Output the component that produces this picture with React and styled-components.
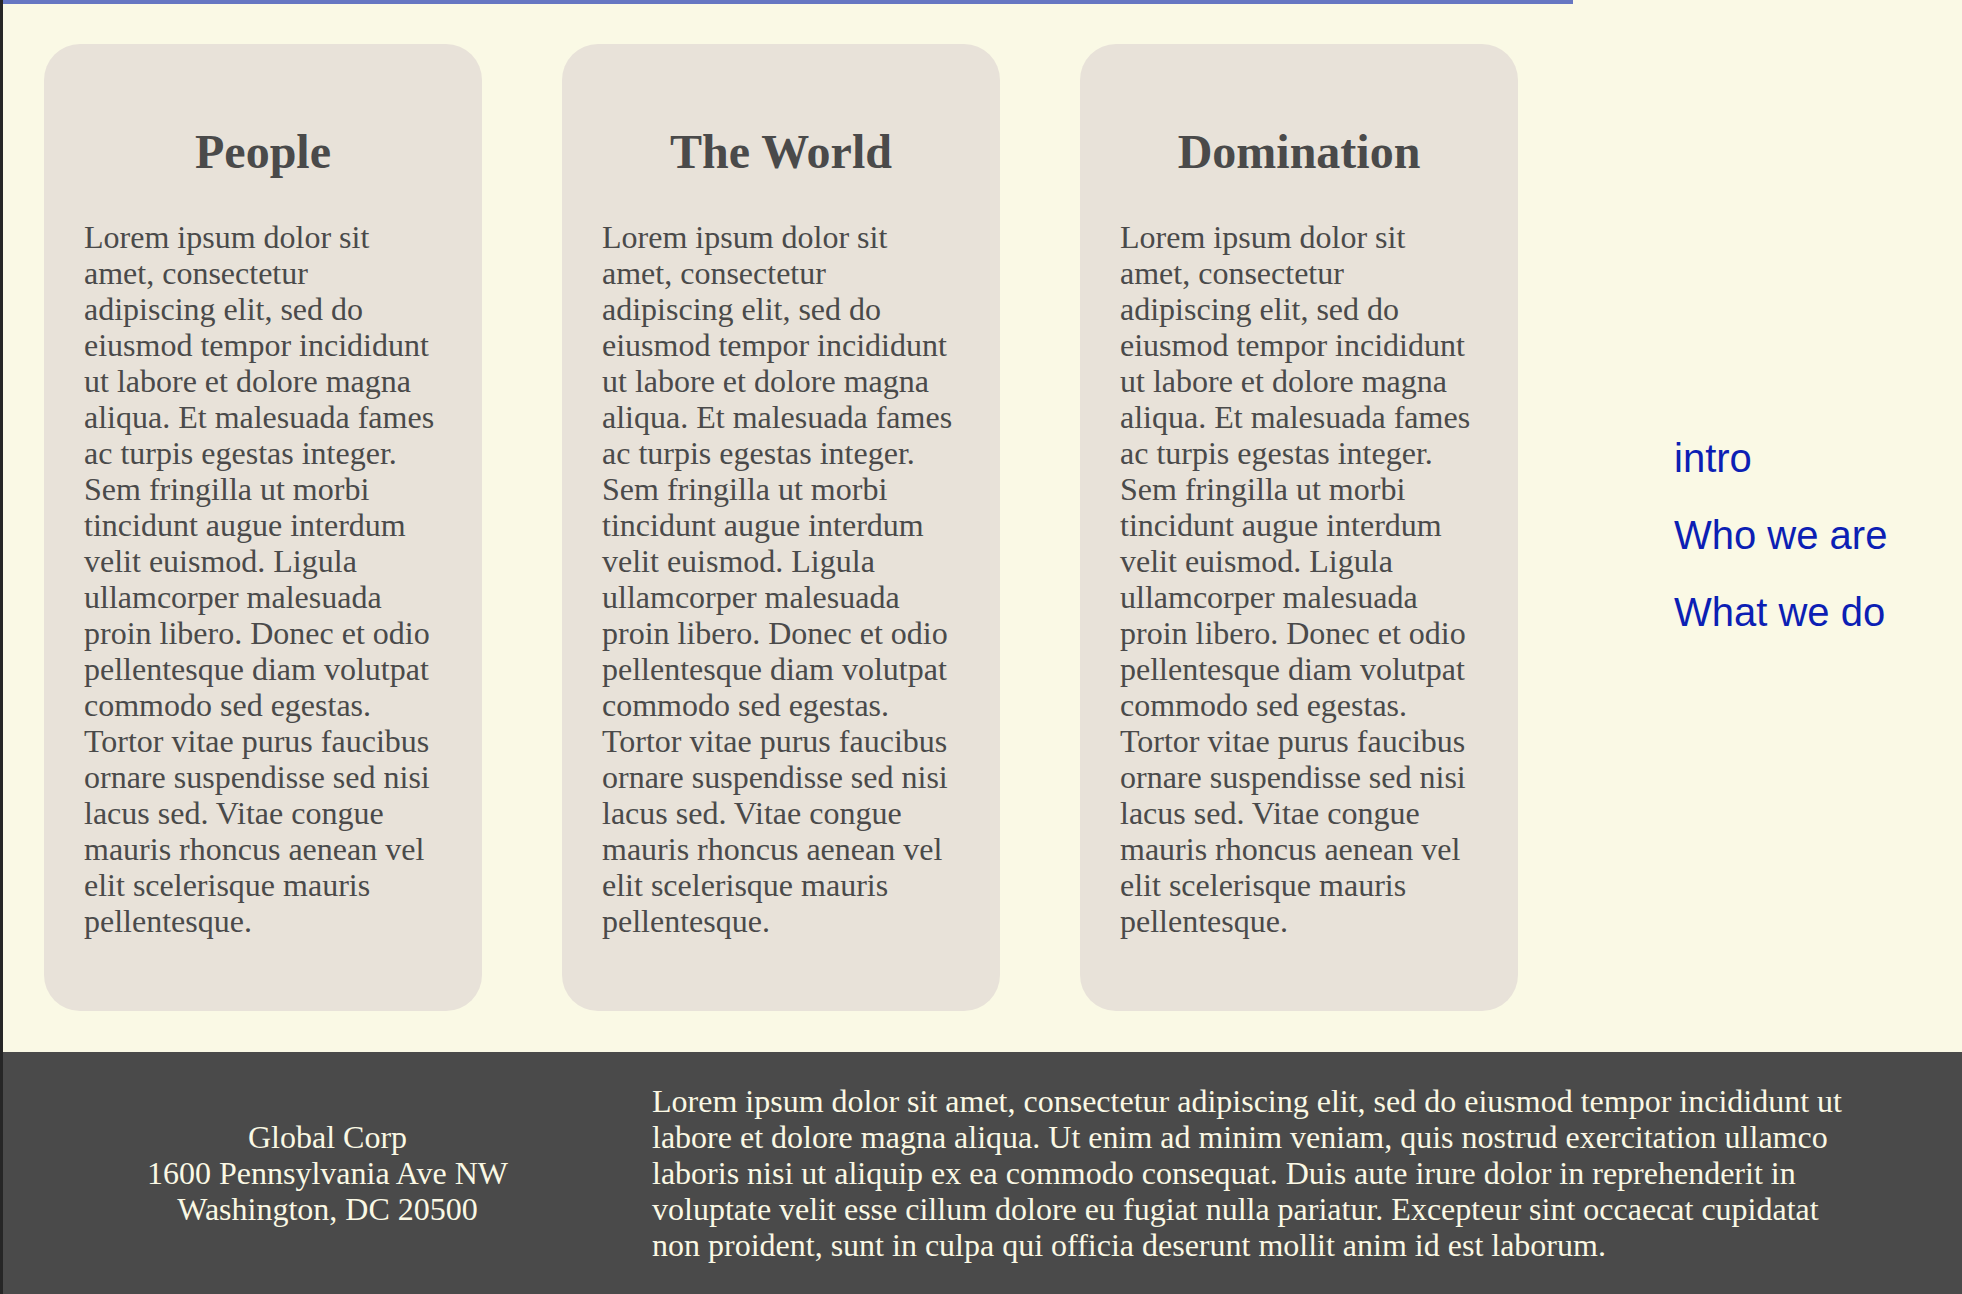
import React from "react";
import styled, { createGlobalStyle } from "styled-components";

const GlobalStyle = createGlobalStyle`
  html, body {
    margin: 0;
    padding: 0;
    background: #faf9e5;
  }
  body {
    font-family: "Liberation Serif", "Times New Roman", serif;
  }
`;

const lorem =
  "Lorem ipsum dolor sit amet, consectetur adipiscing elit, sed do eiusmod tempor incididunt ut labore et dolore magna aliqua. Et malesuada fames ac turpis egestas integer. Sem fringilla ut morbi tincidunt augue interdum velit euismod. Ligula ullamcorper malesuada proin libero. Donec et odio pellentesque diam volutpat commodo sed egestas. Tortor vitae purus faucibus ornare suspendisse sed nisi lacus sed. Vitae congue mauris rhoncus aenean vel elit scelerisque mauris pellentesque.";

const footerText =
  "Lorem ipsum dolor sit amet, consectetur adipiscing elit, sed do eiusmod tempor incididunt ut labore et dolore magna aliqua. Ut enim ad minim veniam, quis nostrud exercitation ullamco laboris nisi ut aliquip ex ea commodo consequat. Duis aute irure dolor in reprehenderit in voluptate velit esse cillum dolore eu fugiat nulla pariatur. Excepteur sint occaecat cupidatat non proident, sunt in culpa qui officia deserunt mollit anim id est laborum.";

const cards = ["People", "The World", "Domination"];
const links = ["intro", "Who we are", "What we do"];

export default function App() {
  return (
    <Page>
      <GlobalStyle />
      <Main>
        <Cards>
          {cards.map((title) => (
            <Card key={title}>
              <CardTitle>{title}</CardTitle>
              <CardText>{lorem}</CardText>
            </Card>
          ))}
        </Cards>
        <Nav>
          {links.map((l) => (
            <NavLink key={l} href="#">
              {l}
            </NavLink>
          ))}
        </Nav>
      </Main>
      <Footer>
        <Address>
          Global Corp
          <br />
          1600 Pennsylvania Ave NW
          <br />
          Washington, DC 20500
        </Address>
        <FooterText>{footerText}</FooterText>
      </Footer>
    </Page>
  );
}

const Page = styled.div`
  border-left: 3px solid #262626;
  min-height: 100vh;
  box-sizing: border-box;
  display: flex;
  flex-direction: column;
`;

const Main = styled.main`
  display: flex;
  height: 1052px;
`;

const Cards = styled.section`
  width: 1570px;
  box-sizing: border-box;
  border-top: 4px solid #6677c2;
  padding: 40px 55px 0 41px;
  display: flex;
  gap: 80px;
  align-items: flex-start;
`;

const Card = styled.article`
  width: 438px;
  flex-shrink: 0;
  box-sizing: border-box;
  padding: 40px;
  background: #e8e2d9;
  border-radius: 36px;
  color: #4a4a4a;
`;

const CardTitle = styled.h2`
  margin: 40px 0;
  font-size: 48px;
  line-height: 55px;
  font-weight: bold;
  text-align: center;
`;

const CardText = styled.p`
  margin: 0 0 32px;
  font-size: 32px;
  line-height: 36px;
`;

const Nav = styled.nav`
  flex: 1;
  display: flex;
  flex-direction: column;
  justify-content: center;
  gap: 31px;
  padding: 18px 0 0 101px;
`;

const NavLink = styled.a`
  font-family: "Liberation Sans", Arial, sans-serif;
  font-size: 40px;
  line-height: 46px;
  color: #0c1fb4;
  text-decoration: none;
`;

const Footer = styled.footer`
  height: 242px;
  background: #4a4a4a;
  color: #faf8e4;
  display: flex;
  align-items: center;
  font-size: 32px;
  line-height: 36px;
`;

const Address = styled.address`
  width: 649px;
  font-style: normal;
  text-align: center;
`;

const FooterText = styled.p`
  width: 1210px;
  margin: 0;
`;
